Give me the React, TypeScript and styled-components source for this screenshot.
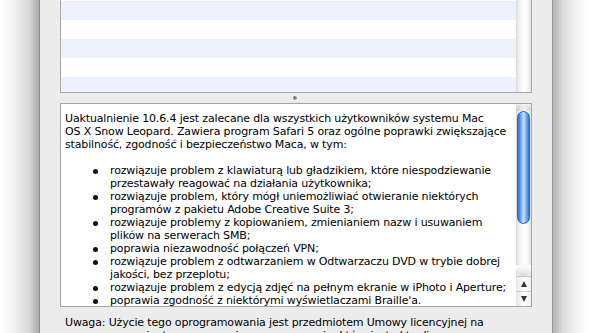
import styled, { createGlobalStyle } from "styled-components";

const GlobalStyle = createGlobalStyle`
  html, body {
    margin: 0;
    padding: 0;
    width: 592px;
    height: 333px;
    overflow: hidden;
    background: #ffffff;
  }
`;

const Page = styled.div`
  display: flex;
  width: 592px;
  height: 333px;
  font-family: "DejaVu Sans", "Liberation Sans", sans-serif;
  font-size: 11px;
  letter-spacing: -0.15px;
  color: #000;
`;

const Shadow = styled.div<{ $side: "left" | "right" }>`
  width: 39px;
  flex-shrink: 0;
  background: ${(p) =>
    p.$side === "left"
      ? "linear-gradient(to right, #ffffff 0%, #f4f4f4 35%, #d6d6d6 75%, #a9a9a9 100%)"
      : "linear-gradient(to left, #ffffff 0%, #f6f6f6 35%, #dadada 75%, #b4b4b4 100%)"};
`;

const Window = styled.div`
  flex: 1;
  background: #ececec;
  border-left: 1px solid #8e8e8e;
  border-right: 1px solid #9a9a9a;
  padding: 0 20px 0 20px;
  display: flex;
  flex-direction: column;
  overflow: hidden;
`;

const ListBox = styled.div`
  height: 93px;
  flex-shrink: 0;
  border: 1px solid #a5a5a5;
  border-top: none;
  background: #fff;
  display: flex;
  box-sizing: border-box;
`;

const Rows = styled.div`
  flex: 1;
  padding-top: 1px;
  overflow: hidden;
`;

const Row = styled.div<{ $alt: boolean }>`
  height: 19px;
  background: ${(p) => (p.$alt ? "#ebf2fd" : "#ffffff")};
`;

const Track = styled.div`
  width: 15px;
  flex-shrink: 0;
  display: flex;
  flex-direction: column;
  background: linear-gradient(
    to right,
    #d9d9d9 0%,
    #ececec 15%,
    #fafafa 40%,
    #ffffff 60%,
    #f2f2f2 85%,
    #e0e0e0 100%
  );
`;

const Splitter = styled.div`
  height: 10px;
  flex-shrink: 0;
  display: flex;
  align-items: center;
  justify-content: center;
`;

const Dimple = styled.div`
  width: 4px;
  height: 4px;
  border-radius: 50%;
  margin-right: 2px;
  background: radial-gradient(circle at 40% 40%, #6a6a6a 0%, #8c8c8c 50%, #d4d4d4 100%);
`;

const TextBox = styled.div`
  height: 204px;
  flex-shrink: 0;
  box-sizing: border-box;
  border: 1px solid #a5a5a5;
  background: #fff;
  display: flex;
`;

const Content = styled.div`
  flex: 1;
  overflow: hidden;
  padding: 8px 0 0 4px;
  line-height: 13px;
  white-space: nowrap;
`;

const Para = styled.p`
  margin: 0 0 13px 0;
`;

const Bullets = styled.ul`
  margin: 0;
  padding: 0;
  list-style: none;
`;

const Item = styled.li`
  display: flex;
  align-items: flex-start;
`;

const Dot = styled.span`
  width: 5px;
  height: 5px;
  border-radius: 50%;
  background: #111;
  margin: 5px 12px 0 28px;
  flex-shrink: 0;
`;

const Cap = styled.div`
  height: 7px;
  flex-shrink: 0;
  background: linear-gradient(
    to right,
    #c9c9c9 0%,
    #e2e2e2 30%,
    #f3f3f3 55%,
    #e4e4e4 80%,
    #cfcfcf 100%
  );
  border-radius: 7px 7px 0 0;
`;

const Thumb = styled.div`
  height: 113px;
  margin: 0 1px;
  flex-shrink: 0;
  border-radius: 7px;
  box-sizing: border-box;
  border: 1px solid #2a62c4;
  background: linear-gradient(
    to right,
    #2f6fd8 0%,
    #5b9bec 20%,
    #a8d0fb 42%,
    #c9e2fd 52%,
    #8bbcf5 68%,
    #5a98ea 86%,
    #3373d8 100%
  );
`;

const Spacer = styled.div`
  flex: 1;
`;

const TrackEnd = styled.div`
  height: 11px;
  flex-shrink: 0;
  border-radius: 0 0 7px 7px;
  background: linear-gradient(to bottom, #ffffff 0%, #ececec 60%, #d8d8d8 100%);
`;

const Arrow = styled.div<{ $dir: "up" | "down" }>`
  height: 14px;
  flex-shrink: 0;
  display: flex;
  align-items: center;
  justify-content: center;
  border-top: 1px solid ${(p) => (p.$dir === "up" ? "#c8c8c8" : "#d0d0d0")};
  background: linear-gradient(
    to right,
    #e6e6e6 0%,
    #f8f8f8 40%,
    #ffffff 60%,
    #ececec 100%
  );
  &::after {
    content: "";
    width: 0;
    height: 0;
    border-left: 3.5px solid transparent;
    border-right: 3.5px solid transparent;
    ${(p) =>
      p.$dir === "up"
        ? "border-bottom: 6px solid #333;"
        : "border-top: 6px solid #333;"}
  }
`;

const Note = styled.div`
  margin-top: 9px;
  padding-left: 5px;
  line-height: 13px;
  white-space: nowrap;
`;

const items: string[][] = [
  [
    "rozwiązuje problem z klawiaturą lub gładzikiem, które niespodziewanie",
    "przestawały reagować na działania użytkownika;",
  ],
  [
    "rozwiązuje problem, który mógł uniemożliwiać otwieranie niektórych",
    "programów z pakietu Adobe Creative Suite 3;",
  ],
  [
    "rozwiązuje problemy z kopiowaniem, zmienianiem nazw i usuwaniem",
    "plików na serwerach SMB;",
  ],
  ["poprawia niezawodność połączeń VPN;"],
  [
    "rozwiązuje problem z odtwarzaniem w Odtwarzaczu DVD w trybie dobrej",
    "jakości, bez przeplotu;",
  ],
  ["rozwiązuje problem z edycją zdjęć na pełnym ekranie w iPhoto i Aperture;"],
  ["poprawia zgodność z niektórymi wyświetlaczami Braille'a."],
];

export default function App() {
  return (
    <>
      <GlobalStyle />
      <Page>
        <Shadow $side="left" />
        <Window>
          <ListBox>
            <Rows>
              {[true, false, true, false, true].map((alt, i) => (
                <Row key={i} $alt={alt} />
              ))}
            </Rows>
            <Track />
          </ListBox>
          <Splitter>
            <Dimple />
          </Splitter>
          <TextBox>
            <Content>
              <Para>
                Uaktualnienie 10.6.4 jest zalecane dla wszystkich użytkowników systemu Mac
                <br />
                OS X Snow Leopard. Zawiera program Safari 5 oraz ogólne poprawki zwiększające
                <br />
                stabilność, zgodność i bezpieczeństwo Maca, w tym:
              </Para>
              <Bullets>
                {items.map((lines, i) => (
                  <Item key={i}>
                    <Dot />
                    <span>
                      {lines.map((l, j) => (
                        <span key={j}>
                          {j > 0 && <br />}
                          {l}
                        </span>
                      ))}
                    </span>
                  </Item>
                ))}
              </Bullets>
            </Content>
            <Track>
              <Cap />
              <Thumb />
              <Spacer />
              <TrackEnd />
              <Arrow $dir="up" />
              <Arrow $dir="down" />
            </Track>
          </TextBox>
          <Note>
            Uwaga: Użycie tego oprogramowania jest przedmiotem Umowy licencyjnej na
            <br />
            oprogramowanie, towarzyszącej oprogramowaniu, które jest aktualizowane
          </Note>
        </Window>
        <Shadow $side="right" />
      </Page>
    </>
  );
}
